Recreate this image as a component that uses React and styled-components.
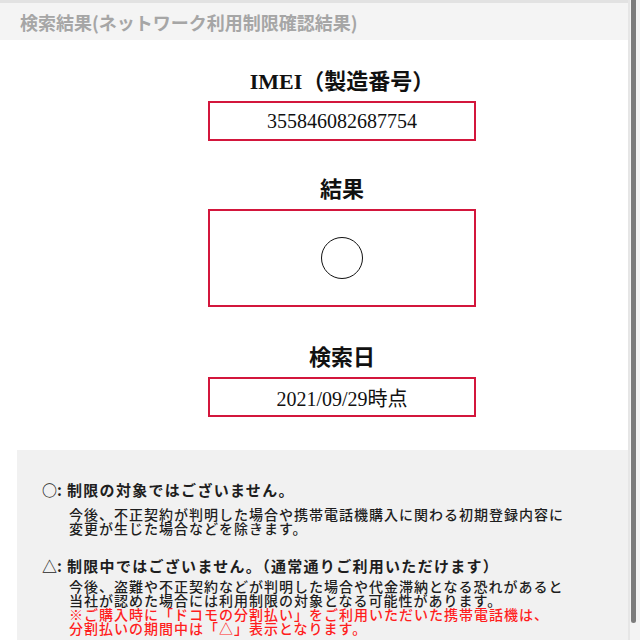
import React from 'react'
import styled, { createGlobalStyle } from 'styled-components'

const GlobalStyle = createGlobalStyle`
  html, body {
    margin: 0;
    padding: 0;
    background: #ffffff;
    overflow: hidden;
  }
`

const Page = styled.div`
  display: flex;
  width: 640px;
  height: 640px;
  overflow: hidden;
  font-family: "Noto Sans CJK JP", "Noto Sans", sans-serif;
`

const Main = styled.div`
  flex: 1;
  min-width: 0;
  display: flex;
  flex-direction: column;
  border-top: 3px solid #e2e2e2;
`

const Scrollbar = styled.div`
  flex-shrink: 0;
  width: 12px;
  background: #f3f3f3;
  border-left: 2px solid #e6e6e6;
  box-sizing: border-box;
  padding-left: 1px;
`

const Thumb = styled.div`
  width: 5px;
  height: 623px;
  background: #7c7c7c;
  border-radius: 0 0 3px 3px;
`

const Header = styled.div`
  flex-shrink: 0;
  height: 37px;
  background: #f4f4f4;
  display: flex;
  align-items: center;
  padding-left: 20px;
  font-size: 18px;
  font-weight: 700;
  color: #a6a6a6;
`

const Content = styled.div`
  flex-shrink: 0;
  display: flex;
  flex-direction: column;
  align-items: center;
  padding: 29px 0 0 56px;
`

const Label = styled.div`
  font-family: "Liberation Serif", "Noto Sans CJK JP", serif;
  font-size: 22px;
  font-weight: 700;
  line-height: 26px;
  color: #111;
  margin-bottom: 6px;
`

const Box = styled.div`
  width: 268px;
  height: ${p => p.$h}px;
  box-sizing: border-box;
  border: 2px solid #d3163c;
  display: flex;
  align-items: center;
  justify-content: center;
  font-family: "Liberation Serif", "Noto Sans CJK JP", serif;
  font-size: 20px;
  color: #111;
  margin-bottom: ${p => p.$mb}px;
`

const Circle = styled.div`
  width: 42px;
  height: 42px;
  border-radius: 50%;
  border: 1.5px solid #111;
  box-sizing: border-box;
`

const Panel = styled.div`
  flex: 1;
  min-height: 0;
  overflow: hidden;
  margin-left: 17px;
  background: #f1f1f1;
  padding: 30px 0 0 25px;
  color: #1e1e1e;
`

const Item = styled.div`
  display: grid;
  grid-template-columns: 25px 1fr;
  margin-bottom: 21px;
`

const Mark = styled.div`
  font-size: 15px;
  font-weight: 700;
  line-height: 20px;
  white-space: nowrap;
`

const Title = styled.div`
  font-size: 15px;
  font-weight: 700;
  line-height: 20px;
  letter-spacing: 1.3px;
  white-space: nowrap;
  margin-bottom: ${p => p.$gap}px;
`

const Note = styled.div`
  grid-column: 2;
  font-size: 14px;
  line-height: 14px;
  font-weight: 500;
  letter-spacing: 1px;
  white-space: nowrap;
  margin-left: 2px;
  color: ${p => (p.$red ? '#ff1e1e' : '#1e1e1e')};
`

export default function App() {
  return (
    <Page>
      <GlobalStyle />
      <Main>
        <Header>検索結果(ネットワーク利用制限確認結果)</Header>
        <Content>
          <Label>IMEI（製造番号）</Label>
          <Box $h={40} $mb={36}>355846082687754</Box>
          <Label>結果</Label>
          <Box $h={98} $mb={38}>
            <Circle />
          </Box>
          <Label>検索日</Label>
          <Box $h={40} $mb={33}>2021/09/29時点</Box>
        </Content>
        <Panel>
          <Item>
            <Mark>○:</Mark>
            <Title $gap={7}>制限の対象ではございません。</Title>
            <Note>今後、不正契約が判明した場合や携帯電話機購入に関わる初期登録内容に</Note>
            <Note>変更が生じた場合などを除きます。</Note>
          </Item>
          <Item>
            <Mark>△:</Mark>
            <Title $gap={3}>制限中ではございません。（通常通りご利用いただけます）</Title>
            <Note>今後、盗難や不正契約などが判明した場合や代金滞納となる恐れがあると</Note>
            <Note>当社が認めた場合には利用制限の対象となる可能性があります。</Note>
            <Note $red>※ご購入時に「ドコモの分割払い」をご利用いただいた携帯電話機は、</Note>
            <Note $red>分割払いの期間中は「△」表示となります。</Note>
          </Item>
        </Panel>
      </Main>
      <Scrollbar>
        <Thumb />
      </Scrollbar>
    </Page>
  )
}
